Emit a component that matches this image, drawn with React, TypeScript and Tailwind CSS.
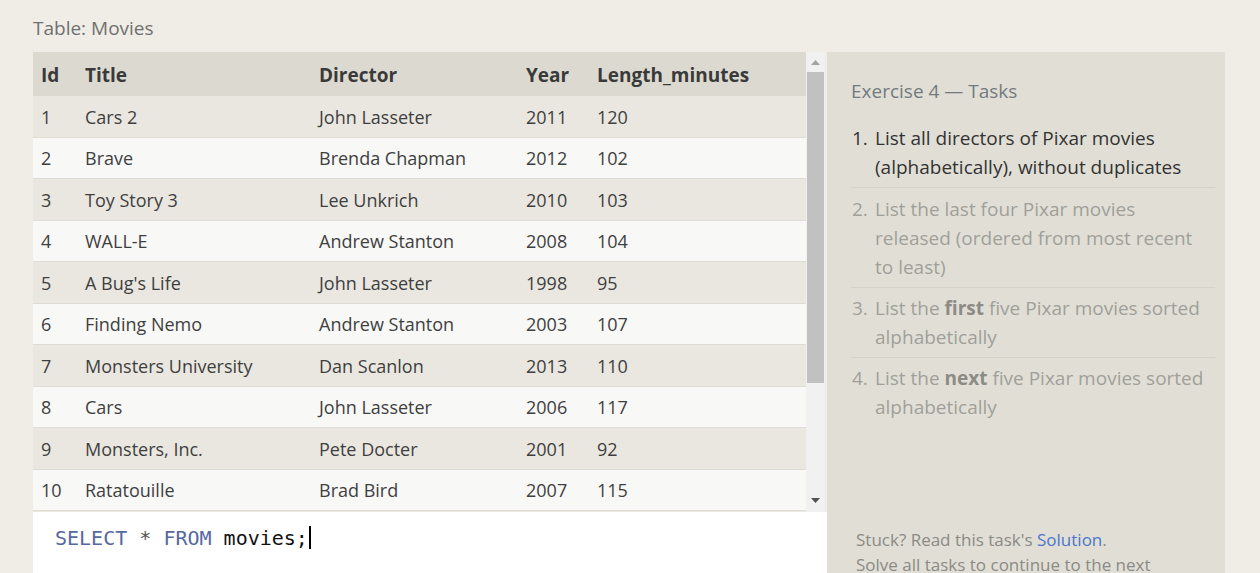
import React from 'react';

const movies = [
  { id: 1, title: 'Cars 2', director: 'John Lasseter', year: 2011, length: 120 },
  { id: 2, title: 'Brave', director: 'Brenda Chapman', year: 2012, length: 102 },
  { id: 3, title: 'Toy Story 3', director: 'Lee Unkrich', year: 2010, length: 103 },
  { id: 4, title: 'WALL-E', director: 'Andrew Stanton', year: 2008, length: 104 },
  { id: 5, title: "A Bug's Life", director: 'John Lasseter', year: 1998, length: 95 },
  { id: 6, title: 'Finding Nemo', director: 'Andrew Stanton', year: 2003, length: 107 },
  { id: 7, title: 'Monsters University', director: 'Dan Scanlon', year: 2013, length: 110 },
  { id: 8, title: 'Cars', director: 'John Lasseter', year: 2006, length: 117 },
  { id: 9, title: 'Monsters, Inc.', director: 'Pete Docter', year: 2001, length: 92 },
  { id: 10, title: 'Ratatouille', director: 'Brad Bird', year: 2007, length: 115 },
];

const cols = 'grid grid-cols-[52px_234px_207px_71px_1fr]';

const App = () => {
  return (
    <div
      className="h-[573px] w-[1260px] overflow-hidden bg-[#efede6] text-[#444]"
      style={{ fontFamily: '"Open Sans", "Noto Sans", sans-serif' }}
    >
      <div className="pl-[33px] pt-[14px] text-[19px] leading-[28px] text-[#707070]">Table: Movies</div>

      <div className="mt-[10px] flex pl-[33px]">
        {/* Left: table + editor */}
        <div className="flex w-[794px] flex-col">
          <div className="flex h-[460px] bg-[#ebe9e2]">
            <div className="w-[773px]">
              <div className={`${cols} h-[44px] items-center bg-[#dcdad0] pt-[3px] text-[19px] font-bold text-[#3a3a3a]`}>
                <div className="pl-[8px]">Id</div>
                <div>Title</div>
                <div>Director</div>
                <div>Year</div>
                <div>Length_minutes</div>
              </div>
              {movies.map((m, i) => (
                <div
                  key={m.id}
                  className={`${cols} h-[41.5px] items-center border-b border-[#dedcd5] pt-[2px] text-[18px] text-[#3f3f3f] ${
                    i % 2 === 0 ? 'bg-[#e9e7e0]' : 'bg-[#f8f8f7]'
                  }`}
                >
                  <div className="pl-[8px]">{m.id}</div>
                  <div>{m.title}</div>
                  <div>{m.director}</div>
                  <div>{m.year}</div>
                  <div>{m.length}</div>
                </div>
              ))}
            </div>
            {/* scrollbar */}
            <div className="flex w-[19px] flex-col bg-[#f1f1f1]">
              <div className="flex h-[20px] items-center justify-center">
                <svg width="9" height="5" viewBox="0 0 9 5">
                  <path d="M0 5 L4.5 0 L9 5 Z" fill="#a3a3a3" />
                </svg>
              </div>
              <div className="mx-[1px] h-[311px] bg-[#c1c1c1]" />
              <div className="flex-1" />
              <div className="flex h-[24px] items-center justify-center">
                <svg width="9" height="5" viewBox="0 0 9 5">
                  <path d="M0 0 L9 0 L4.5 5 Z" fill="#505050" />
                </svg>
              </div>
            </div>
            <div className="w-[2px] bg-[#efede6]" />
          </div>
          <div className="flex h-[61px] items-start bg-white pl-[22px] pt-[13px]">
            <span
              className="text-[20px] leading-[26px]"
              style={{ fontFamily: '"DejaVu Sans Mono", "Liberation Mono", monospace' }}
            >
              <span className="text-[#5568a0]">SELECT</span>
              <span className="text-[#555]"> * </span>
              <span className="text-[#5568a0]">FROM</span>
              <span className="text-[#111]"> movies;</span>
            </span>
            <span className="ml-[1px] mt-[1px] h-[23px] w-[2px] bg-black" />
          </div>
        </div>

        {/* Right: tasks panel */}
        <div className="flex h-[521px] w-[398px] flex-col bg-[#e1dfd5] pl-[24px] pr-[10px]">
          <div className="pt-[26px] text-[19px] leading-[26px] text-[#737a80]">Exercise 4 — Tasks</div>
          <ol className="mt-[20px] text-[19px] leading-[29px]">
            <li className="flex border-b border-[#d6d3c9] pb-[5px] pl-[1px] text-[#333]">
              <span className="w-[23px] shrink-0">1.</span>
              <span>List all directors of Pixar movies (alphabetically), without duplicates</span>
            </li>
            <li className="flex border-b border-[#d6d3c9] pb-[5px] pl-[1px] pt-[7px] text-[#a09f9a]">
              <span className="w-[23px] shrink-0">2.</span>
              <span>List the last four Pixar movies released (ordered from most recent to least)</span>
            </li>
            <li className="flex border-b border-[#d6d3c9] pb-[5px] pl-[1px] pt-[6px] text-[#a09f9a]">
              <span className="w-[23px] shrink-0">3.</span>
              <span>
                List the <b className="text-[#8c8b86]">first</b> five Pixar movies sorted alphabetically
              </span>
            </li>
            <li className="flex pl-[1px] pt-[6px] text-[#a09f9a]">
              <span className="w-[23px] shrink-0">4.</span>
              <span>
                List the <b className="text-[#8c8b86]">next</b> five Pixar movies sorted alphabetically
              </span>
            </li>
          </ol>
          <div className="flex-1" />
          <div className="pl-[5px] text-[17px] leading-[25px] text-[#8a8a86]">
            <div>
              Stuck? Read this task's <span className="text-[#4a76cc]">Solution</span>.
            </div>
            <div className="h-[21px] overflow-visible">Solve all tasks to continue to the next</div>
          </div>
        </div>
      </div>
    </div>
  );
};

export default App;
